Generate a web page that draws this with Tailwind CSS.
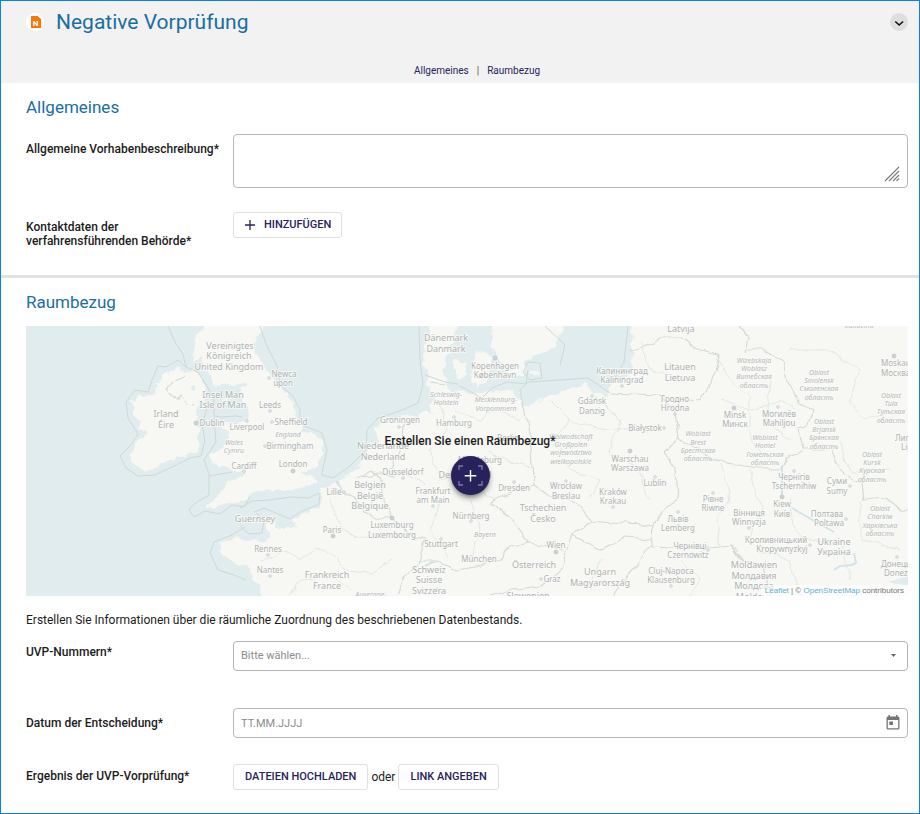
<!DOCTYPE html>
<html lang="de">
<head>
<meta charset="utf-8">
<meta name="viewport" content="width=device-width, initial-scale=1">
<title>Negative Vorprüfung</title>
<script src="https://cdn.jsdelivr.net/npm/@tailwindcss/browser@4"></script>
</head>
<body class="bg-white font-[Roboto,sans-serif] text-[#1c1c1c]">
<div class="flex min-h-screen flex-col border border-[#0a7ff5]">
  <header class="bg-[#f2f2f2] pb-[6px]">
    <div class="flex items-center pt-[7px] pr-[11px] pl-[25px]">
      <span class="mr-3 flex size-[18px] items-center justify-center rounded-full bg-white">
        <svg class="size-[18px]" viewBox="0 0 18 18" aria-hidden="true"><path d="M5.500 3h6L15 6v8.500a.5.5 0 0 1-.5.5h-9a.5.5 0 0 1-.5-.5v-11a.5.5 0 0 1 .5-.5z" fill="#f5780a"/><text x="9.700" y="12.500" font-family="Roboto,sans-serif" font-size="8" font-weight="700" fill="#fff" text-anchor="middle">N</text></svg>
      </span>
      <h1 class="flex-1 text-[21px] leading-7 text-[#196ea2]">Negative Vorprüfung</h1>
      <button type="button" aria-label="Aufklappen" class="flex size-[18px] items-center justify-center rounded-full bg-[#dedede]">
        <svg class="size-[18px]" viewBox="0 0 18 18" fill="none" stroke="#111" stroke-width="1.600" aria-hidden="true"><path d="M5.300 8.500 9.200 12l3.900-3.500"/></svg>
      </button>
    </div>
    <nav class="mt-7 flex justify-center gap-2 pl-[34px] text-[10px] leading-[13px] text-[#28225c]">
      <a href="#allgemeines">Allgemeines</a><span class="text-[#555]">|</span><a href="#raumbezug">Raumbezug</a>
    </nav>
  </header>

  <main class="text-[12px] leading-[14px]">
    <section id="allgemeines" class="border-b-[3px] border-[#e2e2e2] pt-3 pr-[11px] pb-[27px] pl-[25px]">
      <h2 class="mb-[15px] text-[17px] leading-6 text-[#196ea2]">Allgemeines</h2>
      <div class="grid grid-cols-[207px_1fr] gap-y-6">
        <label for="beschreibung" class="pt-[8px] font-medium">Allgemeine Vorhabenbeschreibung*</label>
        <div class="relative flex">
          <textarea id="beschreibung" class="h-[54px] w-full resize-none rounded border border-[#b8b8b8] px-2 py-1 outline-none"></textarea>
          <svg class="pointer-events-none absolute right-2 bottom-[6px] size-4" viewBox="0 0 16 16" stroke="#777" stroke-width="1.100" aria-hidden="true"><path d="M1 15 15 1M5 15 15 5M9 15l6-6M12.500 15l2.500-2.500"/></svg>
        </div>
        <span class="pt-[8px] pr-6 font-medium">Kontaktdaten der verfahrensführenden Behörde*</span>
        <div>
          <button type="button" class="flex h-[26px] items-center gap-2 rounded-[3px] border border-[#e0e0e0] px-[10px] text-[11px] font-medium text-[#28225c]">
            <svg class="size-3" viewBox="0 0 12 12" stroke="#28225c" stroke-width="1.300" aria-hidden="true"><path d="M6 1v10M1 6h10"/></svg>HINZUFÜGEN
          </button>
        </div>
      </div>
    </section>

    <section id="raumbezug" class="pt-3 pr-[11px] pb-5 pl-[25px]">
      <h2 class="mb-3 text-[17px] leading-6 text-[#196ea2]">Raumbezug</h2>
      <div class="relative h-[270px] overflow-hidden bg-[#e1ecee]">
        <svg class="size-full" viewBox="26 326 882 270" preserveAspectRatio="xMidYMid slice" role="img" aria-label="Karte von Europa">
          <defs>
            <filter id="rough" x="-5%" y="-5%" width="110%" height="110%" color-interpolation-filters="sRGB"><feTurbulence type="fractalNoise" baseFrequency=".12" numOctaves="2" seed="4" result="n"/><feDisplacementMap in="SourceGraphic" in2="n" scale="8" xChannelSelector="R" yChannelSelector="G"/></filter>
            <filter id="bend" x="-5%" y="-5%" width="110%" height="110%" color-interpolation-filters="sRGB"><feTurbulence type="fractalNoise" baseFrequency=".06" numOctaves="2" seed="7" result="n"/><feDisplacementMap in="SourceGraphic" in2="n" scale="9" xChannelSelector="R" yChannelSelector="G"/></filter>
            <filter id="veg" x="0" y="0" width="100%" height="100%" color-interpolation-filters="sRGB"><feTurbulence type="fractalNoise" baseFrequency=".035" numOctaves="4" seed="9"/><feColorMatrix values="0 0 0 0 .9  0 0 0 0 .945  0 0 0 0 .905  0 4 0 0 -1.700"/></filter>
            <g id="land">
              <path d="M180 368 172 372 163 373 158 382 158 388 152 395 137 396 132 402 135 408 133 417 141 422 138 428 148 433 137 440 135 450 128 455 132 463 140 467 145 472 157 467 167 462 177 458 187 453 198 453 198 440 199 430 197 420 195 408 203 400 205 390 202 377 192 370 185 373Z"/>
              <path d="M207 320 197 335 192 350 193 360 202 357 208 370 213 385 223 383 237 387 247 380 240 392 242 400 248 407 249 420 237 423 220 422 217 427 227 432 228 440 222 450 210 453 212 463 227 467 237 472 250 472 237 478 227 483 220 493 212 502 204 507 213 508 227 503 242 502 250 495 260 490 283 491 307 487 318 482 307 475 300 473 317 467 323 453 322 440 312 433 300 432 303 423 297 417 293 403 285 392 272 380 263 363 257 353 253 343 260 333 263 320Z"/>
              <path d="M223 400l5-3-1 4-5 3z"/>
              <path d="M265 600 260 587 253 578 250 568 233 562 222 553 220 543 233 538 253 540 267 542 270 533 265 520 273 518 277 527 295 527 292 520 307 513 320 507 322 487 337 482 350 473 363 460 370 443 373 428 387 420 407 415 417 417 423 412 433 412 430 403 437 400 427 387 428 377 423 363 425 346 432 320 459 320 453 337 447 357 443 370 448 387 453 393 460 390 470 395 490 392 510 390 520 400 527 407 543 398 567 390 587 383 592 393 607 397 612 383 627 378 633 370 632 347 631 320 915 320 915 600Z"/>
              <path d="M493 320 491 337 494 353 500 362 510 377 523 375 527 360 543 353 553 348 560 333 568 320Z"/>
              <path d="M477 350 493 357 490 370 485 383 477 387 470 375ZM453 360 465 362 467 375 457 378Z"/>
              <path d="M531 369l7 2 2 4-4 1-5-3z"/>
            </g>
            <clipPath id="landClip"><use href="#land"/></clipPath>
          </defs>
          <use href="#land" fill="#f7f8f4" filter="url(#rough)"/>
          <g clip-path="url(#landClip)"><rect x="26" y="326" width="420" height="270" filter="url(#veg)" opacity=".3"/><rect x="446" y="326" width="462" height="270" filter="url(#veg)" opacity=".75"/></g>
          <g fill="#e1ecee"><path d="M191 386l4-1v5l-3 1zM372 428l4 4 3 10-6 5-3-6zM352 468l10-3-3 4-9 3zM888 582l20-6v9l-12-1z"/></g>
          <g fill="none" stroke="#d3e4e9"><path d="M792 508l10 6 14 8 18 10M834 570l6-4 12-1 4-2-2-10M782 468v28M425 566l8-4M436 588l6 2" stroke-width="2"/></g>
          <!-- coastal zones and state borders -->
          <g fill="none" stroke="#cfd8d8" stroke-width="1" stroke-linejoin="round">
            <path d="M168 326 175 342 183 354 186 367 178 360 166 367 158 366 152 380 148 392 135 390 126 402 128 418 138 434 130 446 120 456 126 468 138 476 155 475 176 465 190 458 201 456 205 440 202 425 208 405"/>
            <path d="M186 367 198 372 208 388 214 402 214 416 222 417 236 416 242 417M214 418 216 442 204 460 209 474 209 495 194 504 189 510 194 517 205 511 220 514 232 505 244 507 250 497M209 476 232 472"/>
            <path d="M260 326 266 344 277 366 280 385 293 396 300 410 300 424 322 433 327 450 323 468 322 475 333 478 350 466 366 450 367 430 378 418 400 411 418 403 423 385 420 360 419 326"/>
            <path d="M240 508 252 501 270 500 290 497 308 498 320 493 319 504 300 512 290 519 264 508 254 512M240 526 249 534 262 533 264 520 256 513M245 527 232 535 214 542 210 553 218 570 234 575 246 580"/>
            <path d="M425 375 445 382 458 384M460 386 482 398 492 388 507 382 526 384 528 370M522 400 520 390 528 382 560 380 588 378 610 393M545 326 565 345 560 365M528 362 540 363 542 378 530 380 523 372ZM628 326 624 362 612 383"/>
          </g>
          <g fill="none" stroke="#d3dad4" stroke-width="1.200" stroke-linejoin="round" filter="url(#bend)">
            <path d="M166 391 176 401 182 396 188 404 196 405M166 391 172 383 184 376M337 482 342 492 354 498 366 512 380 518 392 518 408 534 424 538 420 552 418 566 404 578 398 596M356 478 372 470 382 480 384 500 392 518M362 476 380 474 394 478 392 462 402 450 404 425 412 417"/>
            <path d="M430 382 444 384M522 400 526 412 530 434 532 465 534 486 520 490 495 498 492 504 512 520 528 542 550 545 566 552 572 536 590 520 582 506 568 498 548 496 534 486M590 520 612 522 640 524 654 526 662 510 678 500 676 470 664 452 680 438 676 412 660 396 612 394"/>
            <path d="M630 352 662 338 682 338 700 350 720 354 716 372 706 388 700 400 676 398M745 352 748 338 738 326M745 350 764 350 784 360 788 380 800 404 812 410 806 426 798 428 802 450 832 450 844 474 862 482 864 500 886 498 900 510 908 508M802 452 786 458 782 468 758 468 720 462 690 444 680 438M654 526 650 544 638 564 620 584 612 596M420 562 436 562 448 566 456 570 480 566 500 560 512 545 528 542M566 552 560 572 540 586 510 590 490 596M572 536 600 550 626 538 650 540M650 546 700 548 730 545 744 562 764 566 770 596"/>
          </g>
          <g fill="none" stroke="#e2e7e1" stroke-width="1" filter="url(#bend)"><path d="M260 560 284 552 300 560 316 548 332 556 346 570 372 572 392 560M330 500 340 530 370 540M290 596 300 580 330 574 350 590M440 400 446 430 430 450 440 480 460 476 480 490 496 500M455 410 480 420 500 410 520 420M480 440 500 460 530 466M400 470 420 480 440 500 430 530 450 560M470 500 480 530 470 560M550 400 570 420 556 440 570 470 600 480 590 500M600 400 620 420 610 450 640 470 650 500M570 420 600 430 640 425M640 340 650 370 680 380M720 400 750 410 780 400 800 410M720 360 730 380 750 396 750 440 770 460M770 380 766 420 790 440M720 465 730 500 716 520 720 545M750 470 760 510 750 540M790 500 800 540 840 545 850 580M840 440 850 470 890 470M790 350 830 350 860 370 850 400 866 420 900 410M680 560 700 580 690 596M600 560 590 590M860 500 860 540 900 550M760 550 790 560 800 596"/></g>
          <g font-family="'Noto Sans',sans-serif" text-anchor="middle" fill="#afb2b2" stroke="#fafbf9" stroke-width="2" stroke-opacity=".75" paint-order="stroke" stroke-linejoin="round">
            <g font-size="9">
              <text><tspan x="230" y="349">Vereinigtes</tspan><tspan x="229" y="359">Königreich</tspan><tspan x="229" y="370">United Kingdom</tspan></text>
              <text><tspan x="223" y="398">Insel Man</tspan><tspan x="223" y="408">Isle of Man</tspan></text>
              <text><tspan x="166" y="417">Irland</tspan><tspan x="166" y="428">Éire</tspan></text>
              <text><tspan x="446" y="341">Dänemark</tspan><tspan x="446" y="352">Danmark</tspan></text>
              <text><tspan x="383" y="449">Niederlande</tspan><tspan x="383" y="460">Nederland</tspan></text>
              <text><tspan x="370" y="488">Belgien</tspan><tspan x="370" y="499">België</tspan><tspan x="370" y="509">Belgique</tspan></text>
              <text><tspan x="327" y="578">Frankreich</tspan><tspan x="327" y="589">France</tspan></text>
              <text><tspan x="429" y="573">Schweiz</tspan><tspan x="429" y="583">Suisse</tspan><tspan x="429" y="594">Svizzera</tspan></text>
              <text><tspan x="543" y="511">Tschechien</tspan><tspan x="543" y="522">Česko</tspan></text>
              <text x="534" y="568">Österreich</text><text x="255" y="522">Guernsey</text>
              <text x="465" y="478">Deutschland</text><text x="528" y="599">Slowenien</text>
              <text><tspan x="600" y="575">Ungarn</tspan><tspan x="600" y="586">Magyarország</tspan></text>
              <text x="681" y="332">Latvija</text>
              <text><tspan x="680" y="370">Litauen</tspan><tspan x="680" y="381">Lietuva</tspan></text>
              <text><tspan x="834" y="545">Ukraine</tspan><tspan x="834" y="555">Україна</tspan></text>
              <text><tspan x="754" y="568">Moldawien</tspan><tspan x="754" y="579">Молдавия</tspan><tspan x="754" y="589">Молдова</tspan><tspan x="754" y="600">Moldova</tspan></text>
            </g>
            <g font-size="8">
              <text x="284" y="377">Newca</text><text x="283" y="386">upon</text><text x="270" y="408">Leeds</text><text x="291" y="425">Sheffield</text><text x="247" y="430">Liverpool</text><text x="290" y="449">Birmingham</text><text x="293" y="467">London</text><text x="244" y="469">Cardiff</text><text x="212" y="426">Dublin</text>
              <text x="400" y="423">Groningen</text><text x="454" y="426">Hamburg</text><text x="403" y="475">Düsseldorf</text><text x="334" y="495">Lille</text>
              <text><tspan x="433" y="494">Frankfurt</tspan><tspan x="433" y="503">am Main</tspan></text>
              <text><tspan x="392" y="528">Luxemburg</tspan><tspan x="392" y="538">Luxembourg</tspan></text>
              <text x="332" y="533">Paris</text><text x="268" y="552">Rennes</text><text x="270" y="573">Nantes</text><text x="441" y="547">Stuttgart</text><text x="471" y="519">Nürnberg</text><text x="479" y="562">München</text><text x="480" y="463">Magdeburg</text><text x="508" y="441">Berlin</text><text x="514" y="491">Dresden</text><text x="556" y="548">Wien</text><text x="552" y="582">Graz</text>
              <text><tspan x="495" y="369">Kopenhagen</tspan><tspan x="495" y="378">København</tspan></text>
              <text><tspan x="622" y="374">Калининград</tspan><tspan x="622" y="383">Kaliningrad</tspan></text>
              <text><tspan x="592" y="404">Gdańsk</tspan><tspan x="592" y="414">Danzig</tspan></text>
              <text x="645" y="431">Białystok</text><text x="655" y="486">Lublin</text>
              <text><tspan x="630" y="462">Warschau</tspan><tspan x="630" y="471">Warszawa</tspan></text>
              <text><tspan x="566" y="489">Wrocław</tspan><tspan x="566" y="499">Breslau</tspan></text>
              <text><tspan x="613" y="495">Kraków</tspan><tspan x="613" y="504">Krakau</tspan></text>
              <text><tspan x="675" y="402">Гродно</tspan><tspan x="675" y="411">Hrodna</tspan></text>
              <text><tspan x="678" y="522">Львів</tspan><tspan x="678" y="531">Lemberg</tspan></text>
              <text><tspan x="690" y="549">Чернівці</tspan><tspan x="688" y="558">Czernowitz</tspan></text>
              <text><tspan x="671" y="574">Cluj-Napoca</tspan><tspan x="671" y="583">Klausenburg</tspan></text>
              <text><tspan x="735" y="418">Minsk</tspan><tspan x="735" y="427">Минск</tspan></text>
              <text><tspan x="779" y="417">Могилёв</tspan><tspan x="779" y="426">Mahiljou</tspan></text>
              <text><tspan x="713" y="502">Рівне</tspan><tspan x="713" y="511">Riwne</tspan></text>
              <text><tspan x="749" y="516">Вінниця</tspan><tspan x="749" y="525">Winnyzja</tspan></text>
              <text><tspan x="794" y="480">Чернігів</tspan><tspan x="794" y="489">Tschernihiw</tspan></text>
              <text><tspan x="782" y="507">Kiew</tspan><tspan x="782" y="517">Київ</tspan></text>
              <text><tspan x="837" y="484">Суми</tspan><tspan x="837" y="494">Sumy</tspan></text>
              <text><tspan x="827" y="517">Полтава</tspan><tspan x="829" y="526">Poltawa</tspan></text>
              <text><tspan x="776" y="543">Кропивницький</tspan><tspan x="782" y="552">Kropywnyzkyj</tspan></text>
            </g>
            <g font-size="8" text-anchor="start"><text x="881" y="366">Moskau</text><text x="881" y="376">Москва</text><text x="895" y="441">Липецк</text><text x="901" y="450">Lipezk</text><text x="881" y="567">Донецьк</text><text x="884" y="576">Donezk</text></g>
            <g font-size="7" font-style="italic" fill="#b5b9b8">
              <text><tspan x="234" y="445">Wales</tspan><tspan x="234" y="453">Cymru</tspan></text><text x="288" y="437">England</text>
              <text><tspan x="446" y="397">Schleswig-</tspan><tspan x="446" y="405">Holstein</tspan></text>
              <text><tspan x="496" y="402">Mecklenburg-</tspan><tspan x="496" y="411">Vorpommern</tspan></text>
              <text><tspan x="571" y="439">Woiwodschaft</tspan><tspan x="571" y="447">Großpolen</tspan><tspan x="571" y="455">województwo</tspan><tspan x="571" y="464">wielkopolskie</tspan></text>
              <text x="485" y="537">Bayern</text><text x="371" y="597">Auvergne-</text><text x="859" y="328">область</text>
              <text><tspan x="754" y="363">Wizebskaja</tspan><tspan x="754" y="371">Woblasz</tspan><tspan x="754" y="379">Витебская</tspan><tspan x="754" y="388">область</tspan></text>
              <text><tspan x="819" y="375">Oblast</tspan><tspan x="819" y="383">Smolensk</tspan><tspan x="819" y="391">Смоленская</tspan><tspan x="819" y="400">область</tspan></text>
              <text><tspan x="891" y="398">Oblast</tspan><tspan x="891" y="406">Tula</tspan><tspan x="891" y="414">Тульская</tspan><tspan x="891" y="423">область</tspan></text>
              <text><tspan x="824" y="424">Oblast</tspan><tspan x="824" y="432">Brjansk</tspan><tspan x="824" y="440">Брянская</tspan><tspan x="824" y="449">область</tspan></text>
              <text><tspan x="698" y="436">Woblast</tspan><tspan x="698" y="445">Brest</tspan><tspan x="698" y="453">Брестская</tspan><tspan x="698" y="461">область</tspan></text>
              <text><tspan x="765" y="440">Woblast</tspan><tspan x="765" y="448">Homel</tspan><tspan x="765" y="457">Гомельская</tspan><tspan x="765" y="465">область</tspan></text>
              <text><tspan x="872" y="457">Oblast</tspan><tspan x="872" y="465">Kursk</tspan><tspan x="872" y="473">Курская</tspan><tspan x="872" y="482">область</tspan></text>
              <text><tspan x="880" y="511">Oblast</tspan><tspan x="880" y="519">Charkiw</tspan><tspan x="880" y="528">Харківська</tspan><tspan x="880" y="536">область</tspan></text>
            </g>
          </g>
          <g fill="#f7f8f6" stroke="#c3c6c5" stroke-width=".8">
            <circle cx="269" cy="378" r="1.300"/><circle cx="270" cy="411" r="1.300"/><circle cx="272" cy="422" r="1.300"/><circle cx="265" cy="446" r="1.300"/><circle cx="247" cy="421" r="1.300"/><circle cx="244" cy="471" r="1.300"/><circle cx="399" cy="427" r="1.300"/><circle cx="403" cy="478" r="1.300"/><circle cx="344" cy="492" r="1.300"/><circle cx="433" cy="506" r="1.300"/><circle cx="268" cy="555" r="1.300"/><circle cx="270" cy="576" r="1.300"/><circle cx="441" cy="539" r="1.300"/><circle cx="454" cy="417" r="1.300"/><circle cx="514" cy="482" r="1.300"/><circle cx="541" cy="579" r="1.300"/><circle cx="622" cy="386" r="1.300"/><circle cx="592" cy="396" r="1.300"/><circle cx="664" cy="428" r="1.300"/><circle cx="655" cy="477" r="1.300"/><circle cx="566" cy="481" r="1.300"/><circle cx="613" cy="507" r="1.300"/><circle cx="675" cy="414" r="1.300"/><circle cx="678" cy="512" r="1.300"/><circle cx="708" cy="550" r="1.300"/><circle cx="778" cy="407" r="1.300"/><circle cx="713" cy="493" r="1.300"/><circle cx="749" cy="528" r="1.300"/><circle cx="794" cy="471" r="1.300"/><circle cx="850" cy="486" r="1.300"/><circle cx="846" cy="519" r="1.300"/><circle cx="810" cy="545" r="1.300"/><circle cx="897" cy="557" r="1.300"/><circle cx="671" cy="586" r="1.300"/><circle cx="471" cy="521" r="1.300"/>
            <g fill="#cfd2d1"><circle cx="196" cy="423" r="2"/><circle cx="293" cy="471" r="2"/><circle cx="333" cy="536" r="2"/><circle cx="392" cy="518" r="2"/><circle cx="495" cy="358" r="2"/><circle cx="556" cy="552" r="2"/><circle cx="630" cy="451" r="2"/><circle cx="734" cy="408" r="2"/><circle cx="782" cy="497" r="2"/><circle cx="894" cy="356" r="2"/></g>
          </g>
        </svg>
        <div class="absolute inset-x-0 top-[108px] flex flex-col items-center gap-2 pl-[6px]">
          <span class="font-medium">Erstellen Sie einen Raumbezug*</span>
          <button type="button" aria-label="Raumbezug hinzufügen" class="size-[39px] rounded-full bg-[#28225c] shadow-md shadow-black/40">
            <svg class="size-full" viewBox="0 0 39 39" fill="none" aria-hidden="true"><path d="M8 14v-4h4M27 10h4v4M31 25v4h-4M12 29H8v-4" stroke="#7e7a9d" stroke-width="1.300"/><path d="M19.500 14v11.500M13.700 19.700h11.600" stroke="#fff" stroke-width="1.400"/></svg>
          </button>
        </div>
        <div class="absolute right-0 bottom-0 bg-white/60 px-1 text-[8px] leading-[11px] text-[#777] font-[Liberation_Sans,sans-serif]"><a href="#leaflet" class="text-[#5fb2cf]">Leaflet</a> | © <a href="#osm" class="text-[#5fb2cf]">OpenStreetMap</a> contributors</div>
      </div>
      <p class="mt-[17px] mb-[14px]">Erstellen Sie Informationen über die räumliche Zuordnung des beschriebenen Datenbestands.</p>
      <div class="grid grid-cols-[207px_1fr]">
        <label for="uvp" class="pt-1 font-medium">UVP-Nummern*</label>
        <div class="relative mb-[37px]">
          <select id="uvp" class="block h-[30px] w-full appearance-none rounded border border-[#b4b4b4] px-[7px] text-[11px] text-[#8c8c8c]"><option>Bitte wählen...</option></select>
          <svg class="pointer-events-none absolute top-[13px] right-3 h-[3px] w-[5px]" viewBox="0 0 5 3" fill="#666" aria-hidden="true"><path d="M0 0h5L2.500 3z"/></svg>
        </div>
        <label for="datum" class="pt-[8px] font-medium">Datum der Entscheidung*</label>
        <div class="relative mb-[26px]">
          <input id="datum" type="text" placeholder="TT.MM.JJJJ" class="block h-[30px] w-full rounded border border-[#b8b8b8] px-[7px] text-[11px] outline-none placeholder:text-[#8c8c8c]">
          <button type="button" aria-label="Kalender öffnen" class="absolute top-[7px] right-[7px] size-4"><svg class="size-4" viewBox="0 0 16 16" aria-hidden="true"><path d="M3.500 0H5v1.500h6V0h1.500v1.500h.5A1.500 1.500 0 0 1 14.500 3v10a1.500 1.500 0 0 1-1.500 1.500h-10A1.500 1.500 0 0 1 1.500 13V3a1.500 1.500 0 0 1 1.500-1.500h.5zM2.800 5v8.200h10.400V5zM4.300 6.500h3.700v3.500H4.300z" fill="#757575" fill-rule="evenodd"/></svg></button>
        </div>
        <span class="pt-[5px] font-medium">Ergebnis der UVP-Vorprüfung*</span>
        <div class="flex items-center gap-[3px]">
          <button type="button" class="h-[26px] rounded-[3px] border border-[#e0e0e0] px-[11px] text-[11px] font-medium text-[#28225c]">DATEIEN HOCHLADEN</button>
          <span>oder</span>
          <button type="button" class="h-[26px] rounded-[3px] border border-[#e0e0e0] px-[11px] text-[11px] font-medium text-[#28225c]">LINK ANGEBEN</button>
        </div>
      </div>
    </section>
  </main>
</div>
</body>
</html>
